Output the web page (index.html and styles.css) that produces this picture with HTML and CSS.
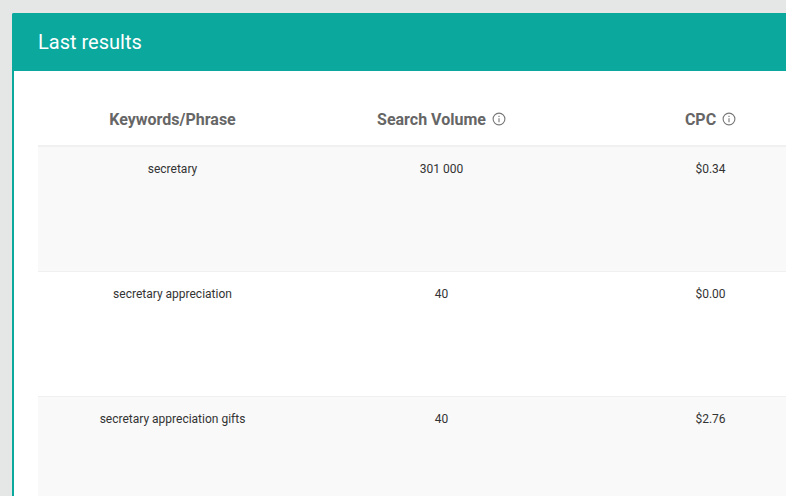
FILE: index.html
```html
<!DOCTYPE html>
<html lang="en">
<head>
<meta charset="utf-8">
<title>Last results</title>
<link rel="stylesheet" href="styles.css">
</head>
<body>
<section class="card">
  <header class="card-head"><h2 class="card-title">Last results</h2></header>
  <div class="card-body">
    <div class="table">
      <div class="row row-head">
        <div class="cell th">Keywords/Phrase</div>
        <div class="cell th">Search Volume<svg class="info" viewBox="0 0 14 14"><circle cx="7" cy="7" r="5.9"/><path d="M7 6.2v4M7 3.7v1.4"/></svg></div>
        <div class="cell th">CPC<svg class="info" viewBox="0 0 14 14"><circle cx="7" cy="7" r="5.9"/><path d="M7 6.2v4M7 3.7v1.4"/></svg></div>
      </div>
      <div class="row row-alt">
        <div class="cell">secretary</div><div class="cell">301 000</div><div class="cell">$0.34</div>
      </div>
      <div class="row">
        <div class="cell">secretary appreciation</div><div class="cell">40</div><div class="cell">$0.00</div>
      </div>
      <div class="row row-alt">
        <div class="cell">secretary appreciation gifts</div><div class="cell">40</div><div class="cell">$2.76</div>
      </div>
    </div>
  </div>
</section>
</body>
</html>
```

FILE: styles.css
```css
html, body { margin: 0; height: 100%; overflow: hidden; }
body {
  background: #e5e6e6;
  padding: 13px 0 0 12px;
  box-sizing: border-box;
  font-family: Roboto, "Liberation Sans", sans-serif;
  color: #333;
}
.card {
  width: 1000px;
  height: 900px;
  background: #fff;
  border-left: 2px solid #0ba89e;
  border-radius: 2px 0 0 0;
  margin-left: 0;
}
.card-head {
  background: #0ba89e;
  height: 58px;
  margin-left: -2px;
  padding-left: 26px;
  display: flex;
  align-items: center;
  border-radius: 2px 0 0 0;
}
.card-title { margin: 0; font-size: 20px; font-weight: 400; color: #fff; }
.card-body { padding: 24px 0 0 24px; }
.table { width: 807px; }
.row {
  display: grid;
  grid-template-columns: repeat(3, 269px);
  height: 124px;
  border-bottom: 1px solid #f0f0f0;
}
.row-alt { background: #f9f9f9; }
.row-head { height: 50px; border-bottom: 2px solid #f0f0f0; }
.cell {
  font-size: 12px;
  line-height: 16px;
  padding-top: 14px;
  text-align: center;
}
.th {
  font-size: 16px;
  font-weight: 700;
  color: #666;
  line-height: 20px;
  padding-top: 15px;
  display: flex;
  justify-content: center;
  align-items: flex-start;
  gap: 6px;
}
.info { width: 14px; height: 14px; margin-top: 2px; fill: none; stroke: #777; stroke-width: 1.1; }
```
